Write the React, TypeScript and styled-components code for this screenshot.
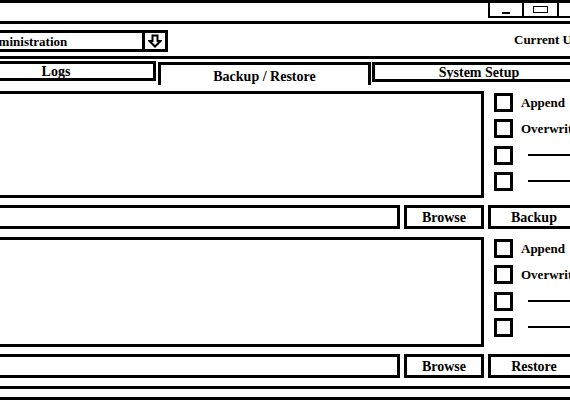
import styled, { createGlobalStyle } from "styled-components";

const GlobalStyle = createGlobalStyle`
  html, body {
    margin: 0;
    padding: 0;
    background: #fff;
    overflow: hidden;
  }
  body {
    font-family: "Liberation Serif", "Times New Roman", serif;
    font-weight: bold;
    font-size: 13px;
    color: #000;
  }
`;

// the wireframe window is wider than the shot, its left edge is cut off
const Window = styled.div`
  width: 642px;
  height: 400px;
  margin-left: -48px;
  display: flex;
  flex-direction: column;
`;

const TitleBar = styled.div`
  height: 24px;
  box-sizing: border-box;
  border-top: 3px solid #000;
  border-bottom: 3px solid #000;
  display: flex;
  justify-content: flex-end;
  align-items: flex-start;
`;

const WinButton = styled.div<{ $w: number }>`
  flex: none;
  width: ${(p) => p.$w}px;
  height: 15px;
  box-sizing: border-box;
  border: 2px solid #000;
  border-top: none;
  display: flex;
  align-items: center;
  justify-content: center;
  & + & {
    margin-left: -2px;
  }
`;

const MinGlyph = styled.span`
  width: 8px;
  height: 2px;
  background: #000;
  margin-top: 6px;
`;

const MaxGlyph = styled.span`
  width: 15px;
  height: 7px;
  box-sizing: border-box;
  border: 1.5px solid #000;
  margin-top: -1px;
`;

const Toolbar = styled.div`
  height: 35px;
  box-sizing: border-box;
  border-bottom: 3px solid #000;
  display: flex;
  align-items: center;
  padding: 2px 0 0 23px;
`;

const Dropdown = styled.div`
  flex: none;
  width: 193px;
  height: 22px;
  box-sizing: border-box;
  border: 3px solid #000;
  display: flex;
`;

const DropdownText = styled.span`
  flex: 1;
  padding-left: 4px;
  line-height: 17px;
  white-space: nowrap;
  overflow: hidden;
`;

const ArrowBox = styled.span`
  flex: none;
  width: 23px;
  box-sizing: border-box;
  border-left: 3px solid #000;
  display: flex;
  align-items: center;
  justify-content: center;
`;

const UserLabel = styled.span`
  flex: none;
  margin: -2px 0 0 346px;
  white-space: nowrap;
`;

const TabRow = styled.div`
  height: 32px;
  box-sizing: border-box;
  padding: 2px 0 0 4px;
  display: flex;
  align-items: flex-start;
`;

const Tab = styled.div<{ $width: number; $active?: boolean; $gap: number }>`
  flex: none;
  width: ${(p) => p.$width}px;
  height: ${(p) => (p.$active ? 23 : 20)}px;
  margin-left: ${(p) => p.$gap}px;
  margin-top: ${(p) => (p.$gap ? 1 : 0)}px;
  box-sizing: border-box;
  border: 3px solid #000;
  border-bottom: ${(p) => (p.$active ? "none" : "3px solid #000")};
  padding-top: ${(p) => (p.$active ? 5 : 1)}px;
  font-size: 14px;
  text-align: center;
  line-height: 14px;
  white-space: nowrap;
`;

const Section = styled.div<{ $areaHeight: number }>`
  display: grid;
  grid-template-columns: 444px 80px 92px;
  grid-template-rows: ${(p) => p.$areaHeight}px 24px;
  column-gap: 4px;
  row-gap: 7px;
  padding-left: 4px;
  & + & {
    margin-top: 8px;
  }
`;

const TextArea = styled.div`
  grid-column: 1 / span 2;
  box-sizing: border-box;
  border: 3px solid #000;
`;

const OptionList = styled.div`
  display: flex;
  flex-direction: column;
  gap: 7.3px;
  padding: 2px 0 0 6px;
`;

const Option = styled.div`
  display: flex;
  align-items: center;
  gap: 8px;
  height: 19px;
  white-space: nowrap;
`;

const Box = styled.span`
  flex: none;
  width: 19px;
  height: 19px;
  box-sizing: border-box;
  border: 3px solid #000;
`;

const Dash = styled.span`
  width: 50px;
  margin-left: 7px;
  border-top: 2px solid #000;
`;

const Field = styled.div`
  box-sizing: border-box;
  border: 3px solid #000;
`;

const Button = styled.div`
  box-sizing: border-box;
  border: 3px solid #000;
  padding-top: 1px;
  display: flex;
  align-items: center;
  justify-content: center;
  font-size: 14px;
  white-space: nowrap;
`;

const Footer = styled.div`
  margin-top: 8px;
  height: 14px;
  box-sizing: border-box;
  border-top: 3px solid #000;
  border-bottom: 3px solid #000;
`;

const DownArrow = () => (
  <svg width="14" height="14" viewBox="0 0 14 14">
    <path
      d="M4.5 1.5 H9.5 V7 H12.5 L7 12.5 L1.5 7 H4.5 Z"
      fill="#fff"
      stroke="#000"
      strokeWidth="2"
    />
  </svg>
);

const Options = () => (
  <OptionList>
    <Option>
      <Box />
      Append
    </Option>
    <Option>
      <Box />
      Overwrite
    </Option>
    <Option>
      <Box />
      <Dash />
    </Option>
    <Option>
      <Box />
      <Dash />
    </Option>
  </OptionList>
);

const App = () => {
  return (
    <Window>
      <GlobalStyle />
      <TitleBar>
        <WinButton $w={36}>
          <MinGlyph />
        </WinButton>
        <WinButton $w={37}>
          <MaxGlyph />
        </WinButton>
        <WinButton $w={37} />
      </TitleBar>
      <Toolbar>
        <Dropdown>
          <DropdownText>Administration</DropdownText>
          <ArrowBox>
            <DownArrow />
          </ArrowBox>
        </Dropdown>
        <UserLabel>Current User: admin</UserLabel>
      </Toolbar>
      <TabRow>
        <Tab $width={200} $gap={0}>
          Logs
        </Tab>
        <Tab $width={213} $gap={2} $active>
          Backup / Restore
        </Tab>
        <Tab $width={214} $gap={1}>
          System Setup
        </Tab>
      </TabRow>
      <Section $areaHeight={107}>
        <TextArea />
        <Options />
        <Field />
        <Button>Browse</Button>
        <Button>Backup</Button>
      </Section>
      <Section $areaHeight={110}>
        <TextArea />
        <Options />
        <Field />
        <Button>Browse</Button>
        <Button>Restore</Button>
      </Section>
      <Footer />
    </Window>
  );
};

export default App;
